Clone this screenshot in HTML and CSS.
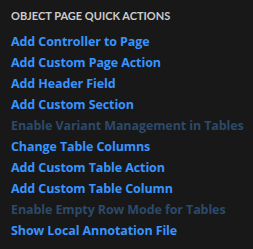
FILE: index.html
```html
<!DOCTYPE html>
<html lang="en">
<head>
<meta charset="UTF-8">
<meta name="viewport" content="width=device-width, initial-scale=1.0">
<title>Quick Actions</title>
<link rel="stylesheet" href="styles.css">
</head>
<body>

<div class="panel">
    <h2 class="panel-title">Object Page Quick Actions</h2>
    <ul class="action-list">
        <li><a class="action" href="#">Add Controller to Page</a></li>
        <li><a class="action" href="#">Add Custom Page Action</a></li>
        <li><a class="action" href="#">Add Header Field</a></li>
        <li><a class="action" href="#">Add Custom Section</a></li>
        <li><span class="action disabled">Enable Variant Management in Tables</span></li>
        <li><a class="action" href="#">Change Table Columns</a></li>
        <li><a class="action" href="#">Add Custom Table Action</a></li>
        <li><a class="action" href="#">Add Custom Table Column</a></li>
        <li><span class="action disabled">Enable Empty Row Mode for Tables</span></li>
        <li><a class="action" href="#">Show Local Annotation File</a></li>
    </ul>
</div>

</body>
</html>
```

FILE: styles.css
```css
* {
    box-sizing: border-box;
}

body {
    margin: 0;
    background-color: #181818;
    font-family: "Open Sans", sans-serif;
}

.panel {
    padding: 7px 11px;
}

.panel-title {
    margin: 0 0 6px;
    font-family: Lato, sans-serif;
    font-size: 11px;
    font-weight: 700;
    text-transform: uppercase;
    color: #cccccc;
    line-height: 18px;
    white-space: nowrap;
}

.action-list {
    list-style: none;
    margin: 0;
    padding: 0;
}

.action-list li {
    font-size: 12.5px;
    line-height: 21px;
    letter-spacing: -0.1px;
    white-space: nowrap;
}

.action {
    font-weight: 700;
    color: #3794ff;
    text-decoration: none;
}

.action.disabled {
    color: #2c4a6a;
}
```
